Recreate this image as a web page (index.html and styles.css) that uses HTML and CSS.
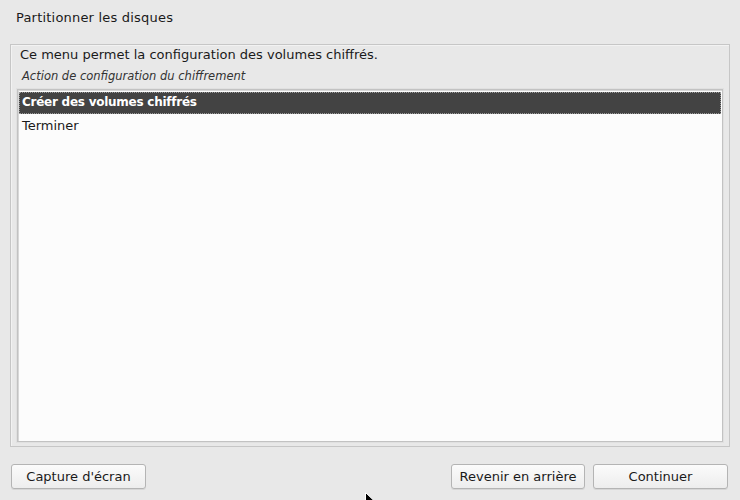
FILE: index.html
```html
<!DOCTYPE html>
<html lang="fr">
<head>
<meta charset="utf-8">
<title>Partitionner les disques</title>
<link rel="stylesheet" href="styles.css">
</head>
<body>
<div class="window">
  <div class="title">Partitionner les disques</div>
  <div class="frame">
    <div class="question">Ce menu permet la configuration des volumes chiffrés.</div>
    <div class="hint">Action de configuration du chiffrement</div>
    <div class="list">
      <div class="item selected">Créer des volumes chiffrés</div>
      <div class="item">Terminer</div>
    </div>
  </div>
  <div class="buttons">
    <button class="btn btn-shot">Capture d'écran</button>
    <div class="spacer"></div>
    <button class="btn btn-back">Revenir en arrière</button>
    <button class="btn btn-next">Continuer</button>
  </div>
  <svg class="cursor" width="12" height="18" viewBox="0 0 12 18"><path d="M0.5 0.5 L0.5 15 L4 11.5 L6.5 17 L8.5 16 L6 10.5 L11 10.5 Z" fill="#000" stroke="#fff" stroke-width="1"/></svg>
</div>
</body>
</html>
```
FILE: styles.css
```css
html, body {
  margin: 0;
  padding: 0;
  background: #e8e8e8;
}
.window {
  position: relative;
  width: 740px;
  height: 500px;
  overflow: hidden;
  font-family: "DejaVu Sans", sans-serif;
  font-size: 13px;
  color: #1a1a1a;
}
.title {
  padding: 10px 0 0 16px;
  height: 44px;
  box-sizing: border-box;
  line-height: 15px;
  letter-spacing: 0.2px;
}
.frame {
  margin: 0 10px 0 10px;
  height: 403px;
  box-sizing: border-box;
  border: 1px solid #c6c6c6;
  box-shadow: inset 1px 1px 0 #f2f2f2;
  padding: 2px 6px 4px 6px;
  display: flex;
  flex-direction: column;
}
.question {
  padding-left: 3px;
  line-height: 16px;
  height: 16px;
}
.hint {
  padding-left: 5px;
  font-style: italic;
  font-size: 11.5px;
  color: #333;
  line-height: 16px;
  height: 26px;
  padding-top: 5px;
  box-sizing: border-box;
}
.list {
  flex: 1;
  background: #fcfcfc;
  border: 1px solid #c2c2c2;
  box-shadow: 0 0 0 1px #e0e0e0, inset 1px 1px 0 #d8d8d8;
  padding: 2px 1px;
}
.item {
  height: 22px;
  line-height: 22px;
  padding-left: 3px;
  box-sizing: border-box;
}
.item.selected {
  background: #434343;
  color: #ffffff;
  font-weight: bold;
  font-size: 12px;
  letter-spacing: -0.25px;
  outline: 1px dotted #9a9a9a;
  outline-offset: -1px;
  line-height: 20px;
  margin-bottom: 1px;
}
.buttons {
  display: flex;
  align-items: center;
  padding: 17px 12px 0 11px;
  gap: 8px;
}
.spacer {
  flex: 1;
}
.btn {
  font-family: "DejaVu Sans", sans-serif;
  font-size: 13px;
  color: #1a1a1a;
  height: 25px;
  border: 1px solid #b4b4b4;
  border-radius: 3px;
  background: linear-gradient(#fbfbfb, #ededed);
  box-shadow: 0 1px 0 #d6d6d6;
  padding: 0;
}
.btn-shot { width: 135px; }
.btn-back { width: 134px; }
.btn-next { width: 135px; }
.cursor {
  position: absolute;
  left: 365px;
  top: 492px;
}
```
